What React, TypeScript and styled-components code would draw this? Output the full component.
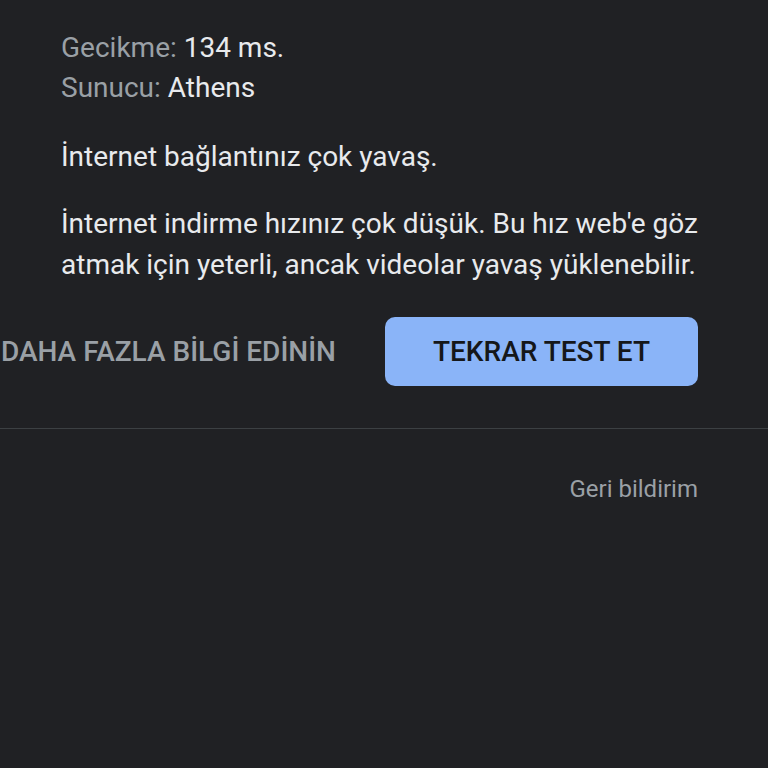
import styled, { createGlobalStyle } from "styled-components";

const GlobalStyle = createGlobalStyle`
  html, body {
    margin: 0;
    padding: 0;
    background: #202124;
  }
  body {
    font-family: Roboto, "Noto Sans", Arial, sans-serif;
    -webkit-font-smoothing: antialiased;
  }
`;

const Page = styled.div`
  width: 768px;
  height: 768px;
  background: #202124;
  overflow: hidden;
`;

const Content = styled.div`
  padding: 28px 70px 0 61px;
`;

const StatLine = styled.div`
  font-size: 28px;
  line-height: 40px;
  color: #e8eaed;
`;

const StatLabel = styled.span`
  color: #9aa0a6;
`;

const Message = styled.p<{ $top: number }>`
  margin: ${(p) => p.$top}px 0 0;
  font-size: 28px;
  line-height: 41px;
  color: #e8eaed;
`;

const ActionRow = styled.div`
  display: flex;
  justify-content: flex-end;
  align-items: center;
  gap: 49px;
  margin: 32px 70px 0 0;
`;

const TextLink = styled.a`
  font-size: 28px;
  font-weight: 500;
  color: #9aa0a6;
  white-space: nowrap;
  text-decoration: none;
`;

const PrimaryButton = styled.button`
  flex: none;
  width: 313px;
  height: 69px;
  border: none;
  border-radius: 10px;
  background: #8ab4f8;
  color: #15171a;
  font-family: inherit;
  font-size: 28px;
  font-weight: 500;
`;

const Divider = styled.hr`
  margin: 42px 0 0;
  border: none;
  border-top: 1px solid #3c4043;
`;

const Footer = styled.div`
  display: flex;
  justify-content: flex-end;
  padding: 46px 70px 0 0;
`;

const FeedbackLink = styled.a`
  font-size: 24px;
  color: #9aa0a6;
  text-decoration: none;
`;

export default function App() {
  return (
    <Page>
      <GlobalStyle />
      <Content>
        <StatLine>
          <StatLabel>Gecikme:</StatLabel> 134 ms.
        </StatLine>
        <StatLine>
          <StatLabel>Sunucu:</StatLabel> Athens
        </StatLine>
        <Message $top={28}>İnternet bağlantınız çok yavaş.</Message>
        <Message $top={26}>
          İnternet indirme hızınız çok düşük. Bu hız web'e göz atmak için
          yeterli, ancak videolar yavaş yüklenebilir.
        </Message>
      </Content>
      <ActionRow>
        <TextLink>DAHA FAZLA BİLGİ EDİNİN</TextLink>
        <PrimaryButton>TEKRAR TEST ET</PrimaryButton>
      </ActionRow>
      <Divider />
      <Footer>
        <FeedbackLink>Geri bildirim</FeedbackLink>
      </Footer>
    </Page>
  );
}
